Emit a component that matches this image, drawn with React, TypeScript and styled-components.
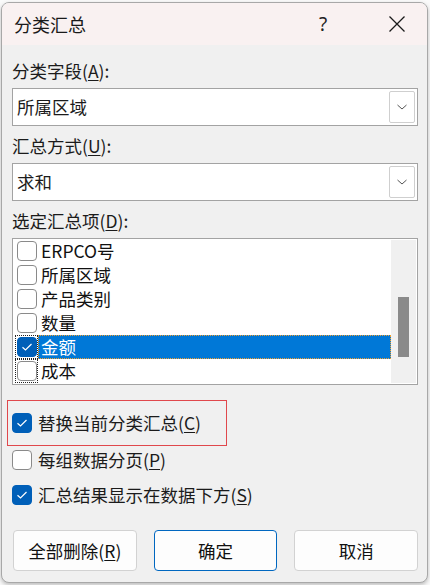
import React from "react";
import styled, { createGlobalStyle } from "styled-components";

const Global = createGlobalStyle`
  html, body { margin: 0; padding: 0; background: #ffffff; }
  body { font-family: "Noto Sans CJK SC", "Noto Sans", sans-serif; color: #1b1b1b; }
  * { box-sizing: border-box; }
`;

const Page = styled.div`
  width: 430px;
  height: 585px;
  padding: 2px 2px 0 1px;
  background: #fafafa;
  overflow: hidden;
`;

const Dialog = styled.div`
  width: 427px;
  height: 581px;
  border: 1px solid #a8a8a8;
  border-radius: 8px;
  overflow: hidden;
  background: #f0f0f0;
  display: flex;
  flex-direction: column;
  box-shadow: 0 2px 4px rgba(0, 0, 0, 0.25);
`;

const TitleBar = styled.div`
  height: 42px;
  flex: none;
  background: #f9f1f1;
  display: flex;
  align-items: center;
  padding-left: 12px;
`;

const Title = styled.div`
  font-size: 18px;
  line-height: 24px;
  flex: 1;
  color: #1a1a1a;
`;

const HelpBtn = styled.div`
  width: 40px;
  text-align: center;
  font-family: "Noto Sans", sans-serif;
  font-size: 19px;
  line-height: 24px;
  color: #222;
  margin-right: 32px;
`;

const CloseBtn = styled.div`
  width: 44px;
  display: flex;
  justify-content: center;
  margin-right: 8px;
`;

const Body = styled.div`
  flex: 1;
  display: flex;
  flex-direction: column;
  padding: 14px 9px 0 10px;
`;

const Label = styled.div<{ $gap?: number }>`
  font-size: 17.5px;
  line-height: 24px;
  height: 24px;
  margin-top: ${(p) => p.$gap ?? 0}px;
  margin-bottom: 5px;
  white-space: nowrap;
`;

const U = styled.span`
  text-decoration: underline;
  text-underline-offset: 2px;
  text-decoration-thickness: 1px;
`;

const Combo = styled.div`
  height: 38px;
  border: 1px solid #a3a3a3;
  background: #fff;
  display: flex;
  align-items: center;
  padding: 0 2px 0 4px;
`;

const ComboText = styled.div`
  flex: 1;
  font-size: 17.5px;
  line-height: 24px;
`;

const DropBtn = styled.div`
  width: 26px;
  height: 32px;
  border: 1px solid #cfcfcf;
  border-radius: 2px;
  display: flex;
  align-items: center;
  justify-content: center;
  background: #fff;
`;

const ListBox = styled.div`
  height: 147px;
  border: 1px solid #a3a3a3;
  background: #fff;
  display: flex;
  padding: 0 0 0 1px;
`;

const Rows = styled.div`
  flex: 1;
  display: flex;
  flex-direction: column;
  padding-top: 0;
`;

const Row = styled.div`
  height: 24px;
  display: flex;
  align-items: center;
`;

const BoxCell = styled.div<{ $focus?: boolean }>`
  width: 23px;
  height: 24px;
  display: flex;
  align-items: center;
  justify-content: center;
  margin-left: 1px;
  outline: ${(p) => (p.$focus ? "1px dotted #222" : "none")};
  outline-offset: -1px;
`;

const ItemText = styled.div<{ $sel?: boolean }>`
  flex: 1;
  height: 24px;
  font-size: 17.5px;
  line-height: 23px;
  padding-left: 3px;
  color: ${(p) => (p.$sel ? "#fff" : "#111")};
  background: ${(p) => (p.$sel ? "#0078d7" : "transparent")};
  outline: ${(p) => (p.$sel ? "1px dotted #f0a030" : "none")};
  outline-offset: -1px;
`;

const Box = styled.div<{ $on?: boolean }>`
  width: 20px;
  height: 20px;
  border-radius: 4px;
  border: 1px solid ${(p) => (p.$on ? "#005fb8" : "#8a8a8a")};
  background: ${(p) => (p.$on ? "#005fb8" : "#fff")};
  display: flex;
  align-items: center;
  justify-content: center;
  flex: none;
`;

const Scroll = styled.div`
  width: 25px;
  margin: 1px 1px 1px 0;
  background: #f0f0f0;
  display: flex;
  justify-content: center;
  padding-top: 57px;
`;

const Thumb = styled.div`
  width: 11px;
  height: 60px;
  background: #8a8a8a;
`;

const Marked = styled.div`
  margin: 15px 0 0 -5px;
  width: 220px;
  height: 46px;
  border: 1px solid #e0484c;
  display: flex;
  align-items: center;
  padding-left: 4px;
`;

const Option = styled.div<{ $gap?: number }>`
  display: flex;
  align-items: center;
  height: 24px;
  margin-top: ${(p) => p.$gap ?? 0}px;
`;

const OptText = styled.div`
  font-size: 17.5px;
  line-height: 24px;
  margin-left: 6px;
  white-space: nowrap;
`;

const Buttons = styled.div`
  display: flex;
  gap: 17px;
  margin-top: 23px;
  padding-left: 1px;
`;

const Btn = styled.div<{ $primary?: boolean }>`
  width: 124px;
  height: 41px;
  border-radius: 4px;
  border: 1px solid ${(p) => (p.$primary ? "#0067c0" : "#d2d2d2")};
  background: #fdfdfd;
  display: flex;
  align-items: center;
  justify-content: center;
  font-size: 17.5px;
  line-height: 24px;
  color: #111;
`;

const Check = ({ color = "#fff" }: { color?: string }) => (
  <svg width="12" height="10" viewBox="0 0 12 10">
    <path d="M1.5 5.2 L4.5 8 L10.5 2" fill="none" stroke={color} strokeWidth="1.2" />
  </svg>
);

const Chevron = () => (
  <svg width="12" height="8" viewBox="0 0 12 8">
    <path d="M1.5 2 L6 6 L10.5 2" fill="none" stroke="#555" strokeWidth="1" />
  </svg>
);

const items = ["ERPCO号", "所属区域", "产品类别", "数量", "金额", "成本"];

export default function App() {
  return (
    <>
      <Global />
      <Page>
        <Dialog>
          <TitleBar>
            <Title>分类汇总</Title>
            <HelpBtn>?</HelpBtn>
            <CloseBtn>
              <svg width="18" height="18" viewBox="0 0 18 18">
                <path d="M1.5 1.5 L16.5 16.5 M16.5 1.5 L1.5 16.5" stroke="#1a1a1a" strokeWidth="1.3" />
              </svg>
            </CloseBtn>
          </TitleBar>
          <Body>
            <Label>
              分类字段(<U>A</U>):
            </Label>
            <Combo>
              <ComboText>所属区域</ComboText>
              <DropBtn>
                <Chevron />
              </DropBtn>
            </Combo>
            <Label $gap={8}>
              汇总方式(<U>U</U>):
            </Label>
            <Combo>
              <ComboText>求和</ComboText>
              <DropBtn>
                <Chevron />
              </DropBtn>
            </Combo>
            <Label $gap={8}>
              选定汇总项(<U>D</U>):
            </Label>
            <ListBox>
              <Rows>
                {items.map((t, i) => {
                  const sel = i === 4;
                  return (
                    <Row key={t}>
                      <BoxCell $focus={i >= 4}>
                        <Box $on={sel}>{sel && <Check />}</Box>
                      </BoxCell>
                      <ItemText $sel={sel}>{t}</ItemText>
                    </Row>
                  );
                })}
              </Rows>
              <Scroll>
                <Thumb />
              </Scroll>
            </ListBox>
            <Marked>
              <Box $on>
                <Check />
              </Box>
              <OptText>
                替换当前分类汇总(<U>C</U>)
              </OptText>
            </Marked>
            <Option $gap={2}>
              <Box />
              <OptText>
                每组数据分页(<U>P</U>)
              </OptText>
            </Option>
            <Option $gap={11}>
              <Box $on>
                <Check />
              </Box>
              <OptText>
                汇总结果显示在数据下方(<U>S</U>)
              </OptText>
            </Option>
            <Buttons>
              <Btn>
                全部删除(<U>R</U>)
              </Btn>
              <Btn $primary>确定</Btn>
              <Btn>取消</Btn>
            </Buttons>
          </Body>
        </Dialog>
      </Page>
    </>
  );
}
